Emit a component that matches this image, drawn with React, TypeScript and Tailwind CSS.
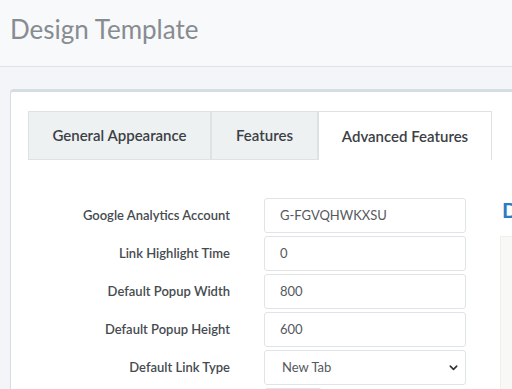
import React from 'react';

const fields = [
  { label: 'Google Analytics Account', value: 'G-FGVQHWKXSU' },
  { label: 'Link Highlight Time', value: '0' },
  { label: 'Default Popup Width', value: '800' },
  { label: 'Default Popup Height', value: '600' },
];

const tabs = [
  { title: 'General Appearance', width: 'w-[183px]', active: false },
  { title: 'Features', width: 'w-[107px]', active: false },
  { title: 'Advanced Features', width: 'w-[174px]', active: true },
];

const App: React.FC = () => {
  return (
    <div className="w-[512px] h-[389px] overflow-hidden bg-[#f3f5f8] font-['Lato','Liberation_Sans',sans-serif]">
      {/* Page header */}
      <header className="h-[67px] bg-[#f8f9fb] border-b border-[#dfe3e8] pl-[10px] pt-[12px]">
        <h1 className="text-[26px] leading-[34px] text-[#878c91] whitespace-nowrap">Design Template</h1>
      </header>

      <div className="pt-[22px] pl-[10px]">
        <div className="w-[560px] bg-white border-t-[3px] border-l border-[#d5dde3] rounded-tl-[4px] pl-[17px] pt-[19px]">
          {/* Tabs */}
          <div className="flex h-[49px]">
            {tabs.map((tab) => (
              <div
                key={tab.title}
                className={`${tab.width} flex items-center justify-center text-[15px] font-semibold text-[#3b4045] whitespace-nowrap border-[#dde3e5] ${
                  tab.active ? 'bg-white border-t border-l border-r' : 'bg-[#eef1f2] border'
                }`}
              >
                {tab.title}
              </div>
            ))}
          </div>

          <div className="flex pt-[38px]">
            {/* Form */}
            <div className="flex flex-col gap-[3px]">
              {fields.map((f) => (
                <div key={f.label} className="flex items-center">
                  <label className="w-[202px] text-right text-[13px] font-semibold text-[#464b50] whitespace-nowrap">{f.label}</label>
                  <div className="ml-[34px] w-[202px] h-[35px] border border-[#dfe4e6] rounded-[3px] flex items-center pl-[15px] text-[13px] text-[#55595d]">
                    {f.value}
                  </div>
                </div>
              ))}
              <div className="flex items-center">
                <label className="w-[202px] text-right text-[13px] font-semibold text-[#464b50] whitespace-nowrap">Default Link Type</label>
                <div className="ml-[34px] w-[202px] h-[35px] border border-[#dfe4e6] rounded-[3px] flex items-center justify-between pl-[17px] pr-[6px] text-[13px] text-[#55595d]">
                  <span>New Tab</span>
                  <svg width="11" height="11" viewBox="0 0 24 24" fill="none" stroke="#333" strokeWidth="3.5" strokeLinecap="round" strokeLinejoin="round">
                    <path d="M5 9l7 7 7-7" />
                  </svg>
                </div>
              </div>
              <div className="flex items-center">
                <div className="w-[202px]" />
                <div className="ml-[34px] w-[58px] h-[35px] border border-[#dfe4e6] rounded-[3px]" />
              </div>
            </div>

            {/* Preview column */}
            <div className="ml-[34px] flex flex-col">
              <div className="text-[21px] leading-[24px] font-bold text-[#2e7cc0] pl-[2px] whitespace-nowrap">Demo</div>
              <div className="mt-[14px] w-[200px] h-[160px] bg-[#f8f9f6] border border-[#eef0ec]" />
            </div>
          </div>
        </div>
      </div>
    </div>
  );
};

export default App;
